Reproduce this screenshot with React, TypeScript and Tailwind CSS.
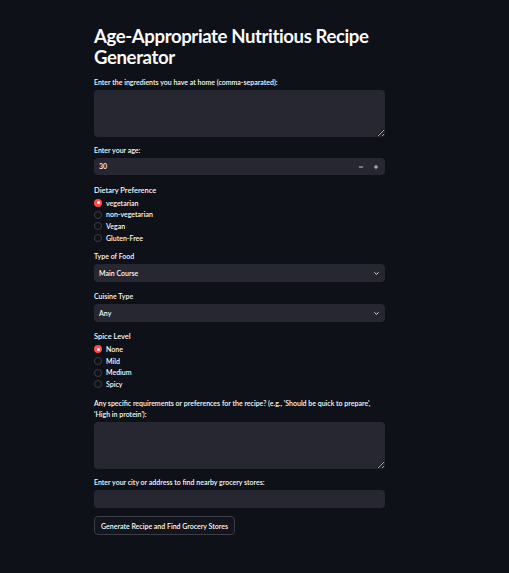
import React, { useState } from 'react';
import { ChevronDown, Minus, Plus } from 'lucide-react';

const font = { fontFamily: 'Lato, "Noto Sans", sans-serif' };

function Label({ children }: { children: React.ReactNode }) {
  return <div className="text-[7px] leading-[11px] font-semibold text-[#fafafa] mb-[2px]">{children}</div>;
}

function Radio({ label, options, value, onChange }: { label: string; options: string[]; value: string; onChange: (v: string) => void }) {
  return (
    <div className="flex flex-col">
      <div className="text-[7.5px] leading-[11px] font-semibold text-[#fafafa] mb-[1px]">{label}</div>
      <div className="flex flex-col">
        {options.map((o) => {
          const active = o === value;
          return (
            <button key={o} onClick={() => onChange(o)} className="flex items-center h-[11.8px] gap-[4px] text-left">
              <span
                className={`w-[8px] h-[8px] rounded-full flex items-center justify-center ${active ? 'bg-[#ff4b4b]' : 'border border-[#3b3d47] bg-[#0e1117]'}`}
              >
                {active && <span className="w-[3px] h-[3px] rounded-full bg-white" />}
              </span>
              <span className="text-[7px] font-semibold text-[#fafafa]">{o}</span>
            </button>
          );
        })}
      </div>
    </div>
  );
}

function Select({ value }: { value: string }) {
  return (
    <div className="h-[18px] rounded-[4px] bg-[#262730] flex items-center justify-between px-[5px]">
      <span className="text-[7px] font-semibold text-[#fafafa]">{value}</span>
      <ChevronDown className="w-[7px] h-[7px] text-[#fafafa]" strokeWidth={3} />
    </div>
  );
}

export default function App() {
  const [diet, setDiet] = useState('vegetarian');
  const [spice, setSpice] = useState('None');
  const [age, setAge] = useState(30);

  return (
    <div className="min-h-screen w-full bg-[#0e1117] text-[#fafafa]" style={font}>
      <div className="w-[291px] ml-[94px] pt-[26px] flex flex-col">
        <h1 className="text-[18.6px] leading-[21px] font-bold tracking-[-0.4px] mb-[9px]">
          Age-Appropriate Nutritious Recipe Generator
        </h1>

        <Label>Enter the ingredients you have at home (comma-separated):</Label>
        <textarea className="h-[47px] rounded-[4px] bg-[#262730] resize-y outline-none text-[7px] p-[5px]" />

        <div className="mt-[8px]">
          <Label>Enter your age:</Label>
          <div className="h-[17px] rounded-[4px] bg-[#262730] flex items-center pl-[5px] pr-[1.5px]">
            <span className="text-[7px] font-semibold flex-1">{age}</span>
            <button onClick={() => setAge(age - 1)} className="w-[15px] flex justify-center">
              <Minus className="w-[6px] h-[6px]" strokeWidth={3} />
            </button>
            <button onClick={() => setAge(age + 1)} className="w-[15px] flex justify-center">
              <Plus className="w-[6px] h-[6px]" strokeWidth={3} />
            </button>
          </div>
        </div>

        <div className="mt-[10px]">
          <Radio label="Dietary Preference" options={['vegetarian', 'non-vegetarian', 'Vegan', 'Gluten-Free']} value={diet} onChange={setDiet} />
        </div>

        <div className="mt-[7px]">
          <Label>Type of Food</Label>
          <Select value="Main Course" />
        </div>

        <div className="mt-[9px]">
          <Label>Cuisine Type</Label>
          <Select value="Any" />
        </div>

        <div className="mt-[9px]">
          <Radio label="Spice Level" options={['None', 'Mild', 'Medium', 'Spicy']} value={spice} onChange={setSpice} />
        </div>

        <div className="mt-[8px]">
          <Label>
            Any specific requirements or preferences for the recipe? (e.g., 'Should be quick to prepare', 'High in protein'):
          </Label>
          <textarea className="w-full h-[47px] rounded-[4px] bg-[#262730] resize-y outline-none text-[7px] p-[5px] block" />
        </div>

        <div className="mt-[8px]">
          <Label>Enter your city or address to find nearby grocery stores:</Label>
          <input className="w-full h-[18px] rounded-[4px] bg-[#262730] outline-none text-[7px] px-[5px] block" />
        </div>

        <div className="mt-[8px] flex">
          <button className="h-[19px] px-[6px] rounded-[4px] border border-[#3b3d47] bg-[#13151c] text-[7px] font-semibold text-[#fafafa]">
            Generate Recipe and Find Grocery Stores
          </button>
        </div>
      </div>
    </div>
  );
}
